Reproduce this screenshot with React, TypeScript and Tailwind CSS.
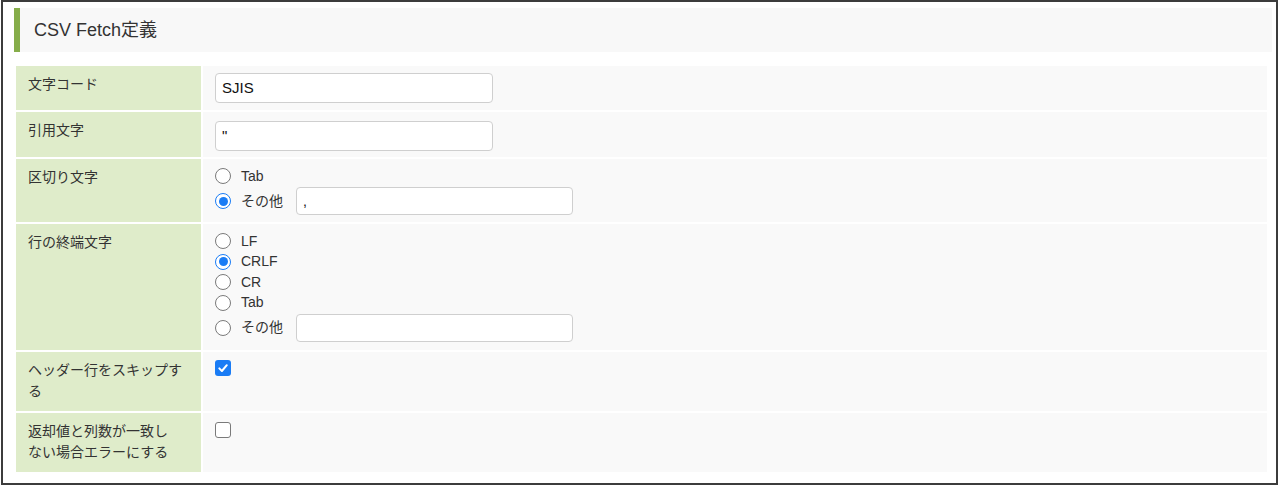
import React from "react";

const FONT = { fontFamily: '"Liberation Sans", "Noto Sans CJK JP", sans-serif' };

function Radio({ checked }: { checked?: boolean }) {
  return checked ? (
    <span className="flex h-4 w-4 shrink-0 items-center justify-center rounded-full border-[1.5px] border-[#1a7cf5] bg-white">
      <span className="h-[9px] w-[9px] rounded-full bg-[#1a7cf5]" />
    </span>
  ) : (
    <span className="h-4 w-4 shrink-0 rounded-full border border-[#7a7a7a] bg-white" />
  );
}

function RadioRow({ label, checked, input, value }: { label: string; checked?: boolean; input?: boolean; value?: string }) {
  return (
    <div className={`flex items-center ${input ? "h-[29px]" : "h-[20.5px]"}`}>
      <Radio checked={checked} />
      <span className="ml-[10px] text-[14px] text-[#333]">{label}</span>
      {input && (
        <div className="ml-[13px] flex h-[28px] w-[277px] items-center rounded-[4px] border border-[#cfcfcf] bg-white px-[6px] text-[14px] text-[#111]">
          {value}
        </div>
      )}
    </div>
  );
}

function TextInput({ value }: { value: string }) {
  return (
    <div className="flex h-[30px] w-[278px] items-center rounded-[4px] border border-[#cfcfcf] bg-white px-[6px] text-[15px] text-[#111]">
      {value}
    </div>
  );
}

function Row({ label, h, children }: { label: React.ReactNode; h: string; children: React.ReactNode }) {
  return (
    <>
      <div className={`${h} bg-[#dfecca] pl-3 pr-3 pt-[8px] text-[14px] leading-[21px] text-[#333]`}>{label}</div>
      <div className={`${h} bg-[#f9f9f9] px-3 pt-[7px]`}>{children}</div>
    </>
  );
}

function Check({ checked }: { checked?: boolean }) {
  return checked ? (
    <span className="flex h-4 w-4 items-center justify-center rounded-[3px] bg-[#1a7cf5]">
      <svg width="12" height="12" viewBox="0 0 12 12">
        <path d="M2.3 6.4 L4.9 9 L9.8 3.2" fill="none" stroke="white" strokeWidth="2" strokeLinecap="round" strokeLinejoin="round" />
      </svg>
    </span>
  ) : (
    <span className="block h-4 w-4 rounded-[3px] border border-[#7a7a7a] bg-white" />
  );
}

export default function App() {
  return (
    <div className="h-[491px] w-[1283px] bg-white" style={FONT}>
      <div className="ml-[1px] h-[485px] w-[1277px] border-2 border-[#3c3c3c] bg-white pl-[11px] pr-[4px] pt-[6px]">
        <div className="flex h-[44px] items-center border-l-[6px] border-[#86ad4a] bg-[#f8f8f8] pl-[14px] text-[18px] text-[#333]">
          CSV Fetch定義
        </div>
        <div className="mt-[12px] mr-[3px] grid grid-cols-[185px_1fr] gap-[2px] p-[2px]">
          <Row label="文字コード" h="h-[44px]">
            <TextInput value="SJIS" />
          </Row>
          <Row label="引用文字" h="h-[45px]">
            <div className="mt-[2px]">
              <TextInput value={'"'} />
            </div>
          </Row>
          <Row label="区切り文字" h="h-[63px]">
            <RadioRow label="Tab" />
            <RadioRow label="その他" checked input value="," />
          </Row>
          <Row label="行の終端文字" h="h-[126px]">
            <RadioRow label="LF" />
            <RadioRow label="CRLF" checked />
            <RadioRow label="CR" />
            <RadioRow label="Tab" />
            <RadioRow label="その他" input />
          </Row>
          <Row
            label={
              <>
                ヘッダー行をスキップす
                <br />る
              </>
            }
            h="h-[59px]"
          >
            <div className="pt-[1px]">
              <Check checked />
            </div>
          </Row>
          <Row
            label={
              <>
                返却値と列数が一致し
                <br />
                ない場合エラーにする
              </>
            }
            h="h-[59px]"
          >
            <div className="pt-[2px]">
              <Check />
            </div>
          </Row>
        </div>
      </div>
    </div>
  );
}
